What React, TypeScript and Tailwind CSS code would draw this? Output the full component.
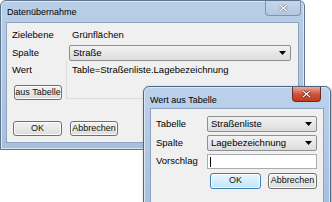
const font = { fontFamily: '"Liberation Sans", Arial, sans-serif' };

function Combo({ value, className }: { value: string; className: string }) {
  return (
    <div
      className={`flex items-center justify-between whitespace-nowrap rounded-[2px] border border-[#8e8f8f] bg-gradient-to-b from-[#f2f2f2] to-[#dcdcdc] pl-[3px] pr-[4px] text-[9.5px] text-black ${className}`}
    >
      <span>{value}</span>
      <svg width="7" height="4" viewBox="0 0 7 4">
        <path d="M0 0h7L3.5 4z" fill="#000" />
      </svg>
    </div>
  );
}

function Btn({ label, className, active }: { label: string; className: string; active?: boolean }) {
  return (
    <div
      className={`flex items-center justify-center whitespace-nowrap rounded-[3px] border text-[9px] text-[#111] ${
        active
          ? "border-[#3c7fb1] bg-gradient-to-b from-[#eaf6fd] to-[#bee6fd] shadow-[inset_0_0_0_1px_#fff]"
          : "border-[#707070] bg-gradient-to-b from-[#f2f2f2] to-[#dddddd] shadow-[inset_0_0_0_1px_#fcfcfc]"
      } ${className}`}
    >
      {label}
    </div>
  );
}

function CloseInactive() {
  return (
    <div className="flex h-[15px] w-[36px] items-center justify-center rounded-b-[4px] border border-t-0 border-[#7f93ad] bg-gradient-to-b from-[#c5d6ea] to-[#b2c7e0]">
      <svg width="9" height="8" viewBox="0 0 9 8">
        <path d="M1 1l7 6M8 1l-7 6" stroke="#7b8da5" strokeWidth="2.6" />
        <path d="M1 1l7 6M8 1l-7 6" stroke="#fff" strokeWidth="1.2" />
      </svg>
    </div>
  );
}

function CloseActive() {
  return (
    <div className="flex h-[15px] w-[29px] items-center justify-center rounded-b-[4px] border border-t-0 border-[#6d2a22] bg-gradient-to-b from-[#e9a99c] via-[#d0533d] to-[#c3381f]">
      <svg width="9" height="8" viewBox="0 0 9 8">
        <path d="M1 1l7 6M8 1l-7 6" stroke="#5a2018" strokeWidth="2.6" />
        <path d="M1 1l7 6M8 1l-7 6" stroke="#fff" strokeWidth="1.2" />
      </svg>
    </div>
  );
}

export default function App() {
  return (
    <div className="relative h-[202px] w-[332px] overflow-hidden bg-white" style={font}>
      {/* main dialog */}
      <div className="absolute left-0 top-0 flex h-[150px] w-[305px] flex-col rounded-t-[6px] border border-[#5f7490] bg-gradient-to-b from-[#b9cee7] to-[#a8c0dc] shadow-[inset_0_0_0_1px_#dce7f4]">
        <div className="flex h-[21px] shrink-0 items-start justify-between pl-[6px] pr-[3px]">
          <span className="pt-[5px] text-[9px] text-black">Datenübernahme</span>
          <CloseInactive />
        </div>
        <div className="mx-[5px] mb-[6px] flex-1 border border-[#8ea3bf] bg-[#f0f0f0] pl-[5px] pr-[7px] pt-[5px] text-[9.5px] text-black">
          <div className="flex h-[14px] items-center">
            <span className="w-[57px]">Zielebene</span>
            <span className="pl-[3px]">Grünflächen</span>
          </div>
          <div className="mt-[3px] flex items-center">
            <span className="w-[57px]">Spalte</span>
            <Combo value="Straße" className="h-[16px] flex-1" />
          </div>
          <div className="flex">
            <div className="flex w-[54px] flex-col">
              <span className="pt-[2px]">Wert</span>
              <Btn label="aus Tabelle" className="ml-[2px] mt-[8px] h-[15px] w-[48px]" />
            </div>
            <div className="h-[38px] flex-1 border-b border-l border-[#dcdcdc] pl-[5px] pt-[2px]">
              Table=Straßenliste.Lagebezeichnung
            </div>
          </div>
          <div className="mt-[21px] flex gap-[8px] pl-[1px]">
            <Btn label="OK" className="h-[15px] w-[49px]" />
            <Btn label="Abbrechen" className="h-[15px] w-[48px]" />
          </div>
        </div>
      </div>

      {/* second dialog */}
      <div className="absolute left-[143px] top-[86px] flex h-[120px] w-[188px] flex-col rounded-t-[6px] border border-[#4e6585] bg-gradient-to-b from-[#bcd2ec] to-[#a6bfdc] shadow-[inset_0_0_0_1px_#dce7f4,1px_1px_3px_rgba(0,0,0,0.35)]">
        <div className="flex h-[21px] shrink-0 items-start justify-between pl-[6px] pr-[9px]">
          <span className="pt-[7px] text-[9px] text-black">Wert aus Tabelle</span>
          <CloseActive />
        </div>
        <div className="mx-[6px] flex flex-1 flex-col gap-[3px] border border-[#8ea3bf] bg-[#f0f0f0] pl-[5px] pr-[6px] pt-[7px] text-[9.5px] text-black">
          <div className="flex items-center">
            <span className="w-[51px]">Tabelle</span>
            <Combo value="Straßenliste" className="h-[16px] flex-1" />
          </div>
          <div className="flex items-center">
            <span className="w-[51px]">Spalte</span>
            <Combo value="Lagebezeichnung" className="h-[16px] flex-1" />
          </div>
          <div className="flex items-center">
            <span className="w-[51px]">Vorschlag</span>
            <div className="flex h-[15px] flex-1 items-center border border-[#abadb3] bg-white pl-[2px]">
              <div className="h-[10px] w-px bg-black" />
            </div>
          </div>
          <div className="flex justify-end gap-[7px] pt-[1px]">
            <Btn label="OK" active className="h-[16px] w-[51px]" />
            <Btn label="Abbrechen" className="h-[16px] w-[49px]" />
          </div>
        </div>
      </div>
    </div>
  );
}
